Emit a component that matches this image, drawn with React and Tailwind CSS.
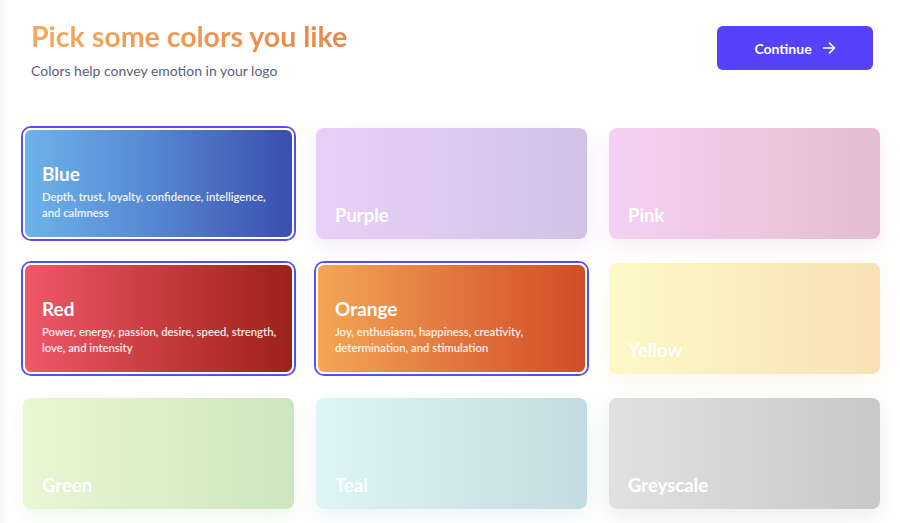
import React from "react";

const cards = [
  { name: "Blue", desc: "Depth, trust, loyalty, confidence, intelligence, and calmness", selected: true, bg: "bg-[linear-gradient(90deg,#6db3ea_0%,#5585d0_50%,#3a4eae_100%)]" },
  { name: "Purple", bg: "bg-[linear-gradient(90deg,#e9cff6_0%,#d2c2e8_100%)]", shadow: "shadow-[0_8px_22px_rgba(205,180,235,0.28)]" },
  { name: "Pink", bg: "bg-[linear-gradient(90deg,#f6d0f3_0%,#e5bdd1_100%)]", shadow: "shadow-[0_8px_22px_rgba(235,185,215,0.28)]" },
  { name: "Red", desc: "Power, energy, passion, desire, speed, strength, love, and intensity", selected: true, bg: "bg-[linear-gradient(90deg,#ef5868_0%,#c63c3f_50%,#9c2218_100%)]" },
  { name: "Orange", desc: "Joy, enthusiasm, happiness, creativity, determination, and stimulation", selected: true, bg: "bg-[linear-gradient(90deg,#f3a756_0%,#e2763f_50%,#d14d27_100%)]" },
  { name: "Yellow", bg: "bg-[linear-gradient(90deg,#fdf9c6_0%,#f8e1b4_100%)]", shadow: "shadow-[0_8px_22px_rgba(245,225,170,0.28)]" },
  { name: "Green", bg: "bg-[linear-gradient(90deg,#e9f7d3_0%,#cce6c0_100%)]", shadow: "shadow-[0_8px_22px_rgba(200,225,185,0.28)]" },
  { name: "Teal", bg: "bg-[linear-gradient(90deg,#ddf5f5_0%,#c3dce1_100%)]", shadow: "shadow-[0_8px_22px_rgba(185,220,225,0.28)]" },
  { name: "Greyscale", bg: "bg-[linear-gradient(90deg,#e1e1e1_0%,#c8c8c8_100%)]", shadow: "shadow-[0_8px_22px_rgba(190,190,190,0.28)]" },
];

function Card({ c }) {
  if (c.selected) {
    return (
      <div className={`h-[111px] rounded-[8px] ring-2 ring-[#5b4cf0] border-2 border-white ${c.bg} flex flex-col justify-end pl-[17px] pr-[14px] pb-[16px]`}>
        <div className="text-[19px] leading-[24px] font-bold text-white">{c.name}</div>
        <div className="mt-[3px] text-[11.3px] leading-[16px] font-semibold text-white/90">{c.desc}</div>
      </div>
    );
  }
  return (
    <div className={`h-[111px] rounded-[8px] ${c.bg} ${c.shadow} flex flex-col justify-end pl-[19px] pb-[12px]`}>
      <div className="text-[18.5px] leading-[24px] font-bold text-white">{c.name}</div>
    </div>
  );
}

export default function App() {
  return (
    <div className="w-[900px] h-[523px] overflow-hidden bg-white shadow-[inset_10px_0_10px_-8px_rgba(0,0,0,0.06)]" style={{ fontFamily: "Lato, 'Noto Sans', sans-serif" }}>
      <div className="flex justify-between pl-[31px] pr-[27px] pt-[18px]">
        <div>
          <h1 className="text-[28.5px] leading-[36px] font-bold bg-[linear-gradient(90deg,#f3a95c,#e8874b)] bg-clip-text text-transparent">Pick some colors you like</h1>
          <p className="mt-[8px] text-[14px] leading-[18px] text-[#5b6178]">Colors help convey emotion in your logo</p>
        </div>
        <button className="mt-[8px] w-[156px] h-[44px] rounded-[6px] bg-[#5543fb] text-white text-[14px] font-bold flex items-center justify-center gap-[10px]">
          Continue
          <svg width="14" height="14" viewBox="0 0 14 14" fill="none" stroke="white" strokeWidth="1.6" strokeLinecap="round" strokeLinejoin="round">
            <path d="M1.5 7h11M7.5 2l5 5-5 5" />
          </svg>
        </button>
      </div>
      <div className="mt-[48px] pl-[23px] grid grid-cols-[271px_271px_271px] gap-x-[22px] gap-y-[24px]">
        {cards.map((c) => (
          <Card key={c.name} c={c} />
        ))}
      </div>
    </div>
  );
}
